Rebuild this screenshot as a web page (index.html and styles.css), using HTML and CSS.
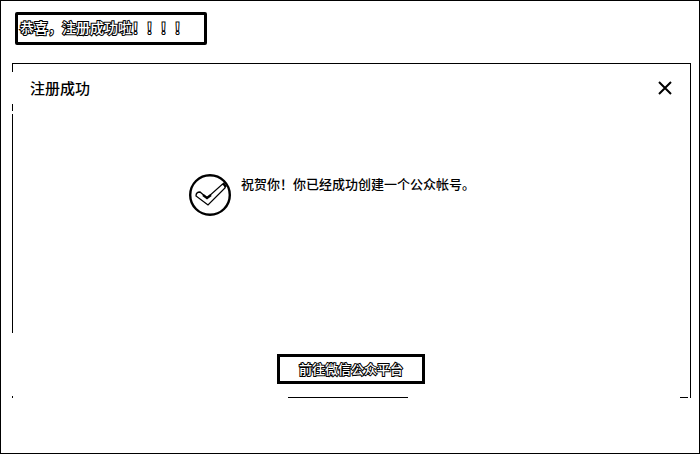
FILE: index.html
```html
<!DOCTYPE html>
<html lang="zh-CN">
<head>
<meta charset="utf-8">
<title>注册成功</title>
<link rel="stylesheet" href="styles.css">
</head>
<body>
<main class="page">
  <h1 class="banner outlined">恭喜，注册成功啦！！！！</h1>
  <section class="dialog" aria-labelledby="dialog-title">
    <header class="dialog-head">
      <h2 class="dialog-title" id="dialog-title">注册成功</h2>
      <button class="close" type="button" aria-label="关闭">
        <svg width="14" height="14" viewBox="0 0 14 14"><path d="M1 1 13 13M13 1 1 13" fill="none" stroke="#000" stroke-width="2"/></svg>
      </button>
    </header>
    <div class="message">
      <svg class="check" width="42" height="42" viewBox="0 0 42 42" fill="none" stroke="#000" aria-hidden="true">
        <circle cx="21" cy="21" r="19.8" stroke-width="2.4"/>
        <path d="M7 22Q7 18 11 18L18 24 33 10.500Q37 10 36 14L19 31Z" stroke-width="1.3"/>
        <path d="M14 21 18 24 22 21M34 9 37 13" stroke-width="2.2"/>
      </svg>
      <p class="message-text">祝贺你！你已经成功创建一个公众帐号。</p>
    </div>
    <footer class="dialog-foot">
      <button class="action outlined" type="button">前往微信公众平台</button>
    </footer>
  </section>
</main>
</body>
</html>
```
FILE: styles.css
```css
* { box-sizing: border-box; }
body { margin: 0; background: #fff; color: #000; font-family: "Noto Sans CJK SC", sans-serif; }
.page { min-height: 100vh; padding: 11px 8px 0 11px; border: 1px solid #000; }
.banner { width: 192px; height: 33px; margin: 0 0 18px 3px; padding: 0 2px; border: 3px solid #000; border-radius: 2px; font-size: 14px; font-weight: 500; line-height: 24px; white-space: nowrap; }
.outlined { color: #fff; -webkit-text-stroke: 2px #000; paint-order: stroke fill; }
.dialog { position: relative; display: flex; flex-direction: column; min-height: 335px; border-top: 1px solid #000; border-right: 1px solid #000; }
.dialog::before { content: ""; position: absolute; left: 0; top: 0; width: 1px; height: 100%; background: linear-gradient(#000 8px, #fff 8px 40px, #000 40px 47px, #fff 47px 50px, #000 50px 269px, #fff 269px calc(100% - 2px), #000 0); }
.dialog::after { content: ""; position: absolute; right: 2px; bottom: 0; width: 8px; height: 1px; background: #000; }
.dialog-head { display: flex; align-items: center; justify-content: space-between; height: 48px; padding: 0 18px; }
.dialog-title { margin: 0; font-size: 15px; font-weight: 500; line-height: 24px; }
.close { display: flex; padding: 0; border: 0; background: none; }
.message { display: flex; gap: 10px; margin: 62px 0 0 177px; }
.message-text { margin: 0; font-size: 13px; font-weight: 500; line-height: 20px; }
.dialog-foot { display: flex; flex-direction: column; align-items: center; margin-top: auto; }
.action { width: 148px; height: 30px; padding: 0; border: 3px solid #000; background: #fff; font-family: inherit; font-size: 13px; font-weight: 500; line-height: 24px; white-space: nowrap; }
.dialog-foot::after { content: ""; width: 120px; height: 1px; margin: 13px 6px 0 0; background: #000; }
```
